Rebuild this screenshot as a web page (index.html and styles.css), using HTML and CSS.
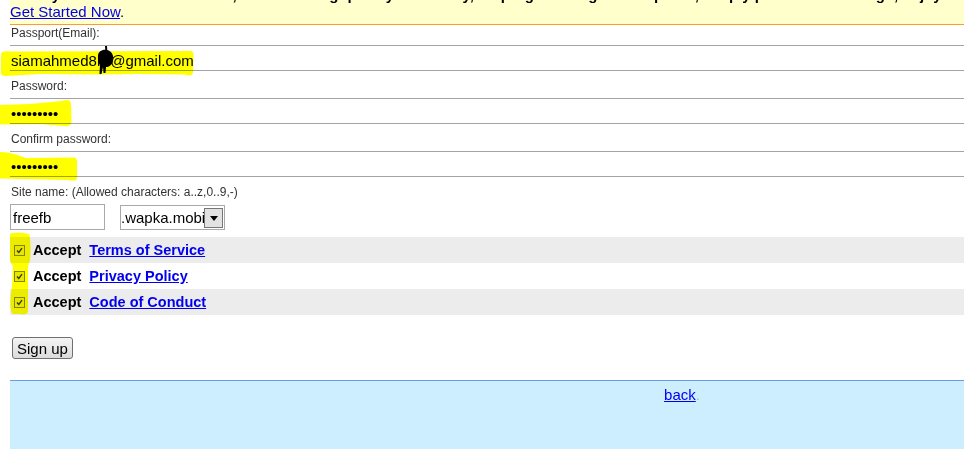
FILE: index.html
```html
<!DOCTYPE html>
<html lang="en">
<head>
    <meta charset="UTF-8">
    <meta name="viewport" content="width=device-width, initial-scale=1.0">
    <title>Sign up</title>
    <link rel="stylesheet" href="styles.css">
</head>
<body>
    <div class="page">
        <div class="notice">
            <b>Build your own free mobile site, forum or blog quickly and easily, no programming skill required, simply pick a name and go, enjoy:</b><br>
            <a href="#">Get Started Now</a>.
        </div>

        <form class="signup">
            <label class="field-label first" for="email">Passport(Email):</label>
            <input class="line-input" id="email" type="text" value="siamahmed8rn@gmail.com">

            <label class="field-label" for="pass">Password:</label>
            <input class="line-input" id="pass" type="password" value="123456789">

            <label class="field-label" for="pass2">Confirm password:</label>
            <input class="line-input" id="pass2" type="password" value="123456789">

            <label class="field-label" for="site">Site name: (Allowed characters: a..z,0..9,-)</label>
            <div class="site-row">
                <input class="site-input" id="site" type="text" value="freefb">
                <div class="domain">
                    <select>
                        <option>.wapka.mobi</option>
                    </select>
                    <span class="arrow"></span>
                </div>
            </div>

            <div class="terms">
                <div class="term">
                    <span class="check"><svg width="9" height="9" viewBox="0 0 9 9"><path d="M2 4.5 L3.8 6.5 L7 2.2" /></svg></span>
                    <span>Accept</span>
                    <a href="#">Terms of Service</a>
                </div>
                <div class="term">
                    <span class="check"><svg width="9" height="9" viewBox="0 0 9 9"><path d="M2 4.5 L3.8 6.5 L7 2.2" /></svg></span>
                    <span>Accept</span>
                    <a href="#">Privacy Policy</a>
                </div>
                <div class="term">
                    <span class="check"><svg width="9" height="9" viewBox="0 0 9 9"><path d="M2 4.5 L3.8 6.5 L7 2.2" /></svg></span>
                    <span>Accept</span>
                    <a href="#">Code of Conduct</a>
                </div>
            </div>

            <div class="actions">
                <button type="button">Sign up</button>
            </div>
        </form>

        <div class="footer">
            <a href="#">back</a><span class="dot">.</span>
        </div>
    </div>

    <!-- marker scribbles drawn over the screenshot -->
    <svg class="marks" width="964" height="449" viewBox="0 0 964 449">
        <path class="hl" d="M1 54 C2 51 5 51 10 51.5 L190 51 C193 51 194 53 193.5 56 L193 72 C193 76 189 76 185 74.5 L140 74 L100 74.5 L40 74 L6 76 C2 76 0 74 1 71 Z" />
        <path class="hl" d="M0 105 L30 104 L62 101 C67 99 71 100 71 104 L71.5 122 C71 126 67 127 63 126 L40 124 L0 124.5 Z" />
        <path class="hl" d="M0 152 C10 152 18 155 26 158 L72 157.5 C76 157 77.5 159 77 163 L77 178 C77 181 73 181 68 180 L0 178.5 Z" />
        <path class="hl" d="M10 234 C14 232 24 233 29 234 C31 236 31 258 29.5 262 L28 266 L28 311 C28 314 25 315 20 314 L13 314 C10 313 10 300 11 293 L12 286 L13 266 C11 264 10 262 10 258 Z" />
        <path class="ink" d="M98 56 C98 51 103 49 107 50 C112 51 114 56 113 61 C112 65 109 67 106 67 L105.5 73 L103.5 73 L103 67 L101.5 74 L99.5 74 L100 65 C98.5 63 97.5 60 98 56 Z" />
        <path class="ink-line" d="M106 46 L106.5 54" />
    </svg>
</body>
</html>
```

FILE: styles.css
```css
html {
    overflow: hidden;
}

body {
    margin: 0 0 0 10px;
    font-family: 'Liberation Sans', Arial, sans-serif;
    font-size: 15px;
    color: #000;
    background: #fff;
}

a {
    color: #00e;
}

.page {
    width: 1344px;
}

/* top notice, page is scrolled a bit so only its last line shows */
.notice {
    margin-top: -14px;
    padding-bottom: 4px;
    line-height: 17px;
    background: #ffc;
    border-bottom: 1px solid #f93;
}

.signup {
    display: flex;
    flex-direction: column;
    align-items: flex-start;
}

.field-label {
    display: block;
    padding: 8px 1px 5px;
    font-size: 12px;
    line-height: 14px;
    color: #333;
}

.field-label.first {
    padding-top: 1px;
}

.line-input {
    display: block;
    width: 100%;
    height: 26px;
    box-sizing: border-box;
    margin: 0;
    padding: 4px 1px 0;
    border: 0;
    border-top: 1px solid #a4a4a4;
    border-bottom: 1px solid #a4a4a4;
    background: transparent;
    font: inherit;
    color: #000;
    outline: none;
}

.site-row {
    display: flex;
    align-items: flex-start;
    gap: 15px;
}

.site-input {
    width: 95px;
    height: 26px;
    box-sizing: border-box;
    margin: 0;
    padding: 0 2px;
    border: 1px solid #a9a9a9;
    font: inherit;
    color: #000;
    outline: none;
}

.domain {
    position: relative;
    width: 105px;
    height: 25px;
    margin-top: 1px;
    box-sizing: border-box;
    border: 1px solid #a9a9a9;
    overflow: hidden;
}

.domain select {
    appearance: none;
    width: 100%;
    height: 100%;
    margin: 0;
    padding: 0;
    border: 0;
    background: #fff;
    font: inherit;
    color: #000;
    outline: none;
}

.arrow {
    position: absolute;
    top: 2px;
    right: 1px;
    width: 19px;
    height: 20px;
    box-sizing: border-box;
    border: 1px solid #777;
    background: #e2e2e2;
    display: flex;
    align-items: center;
    justify-content: center;
}

.arrow::after {
    content: '';
    border-left: 4.5px solid transparent;
    border-right: 4.5px solid transparent;
    border-top: 5px solid #000;
}

.terms {
    align-self: stretch;
    margin-top: 7px;
}

.term {
    display: flex;
    align-items: center;
    gap: 8px;
    height: 26px;
    padding-left: 4px;
    font-size: 14.5px;
    font-weight: bold;
}

.term:nth-child(odd) {
    background: #ececec;
}

.check {
    display: flex;
    align-items: center;
    justify-content: center;
    width: 11px;
    height: 11px;
    box-sizing: border-box;
    border: 1px solid #858585;
    background: #e6e6e6;
}

.check path {
    fill: none;
    stroke: #333;
    stroke-width: 1.3;
}

.actions {
    margin-top: 22px;
    margin-left: 2px;
}

.actions button {
    height: 22px;
    margin: 0;
    padding: 0 4px;
    border: 1px solid #707070;
    border-radius: 3px;
    background: linear-gradient(#f4f4f4, #dcdcdc);
    font: inherit;
    color: #000;
}

.footer {
    margin-top: 21px;
    height: 120px;
    padding-top: 5px;
    border-top: 1px solid #6b9be8;
    background: #cef;
    line-height: 17px;
    text-align: center;
}

.footer .dot {
    color: #bbb;
}

.marks {
    position: absolute;
    top: 0;
    left: 0;
    pointer-events: none;
    mix-blend-mode: multiply;
}

.marks .hl {
    fill: #ff0;
}

.marks .ink {
    fill: #000;
}

.marks .ink-line {
    stroke: #000;
    stroke-width: 2;
}
```
